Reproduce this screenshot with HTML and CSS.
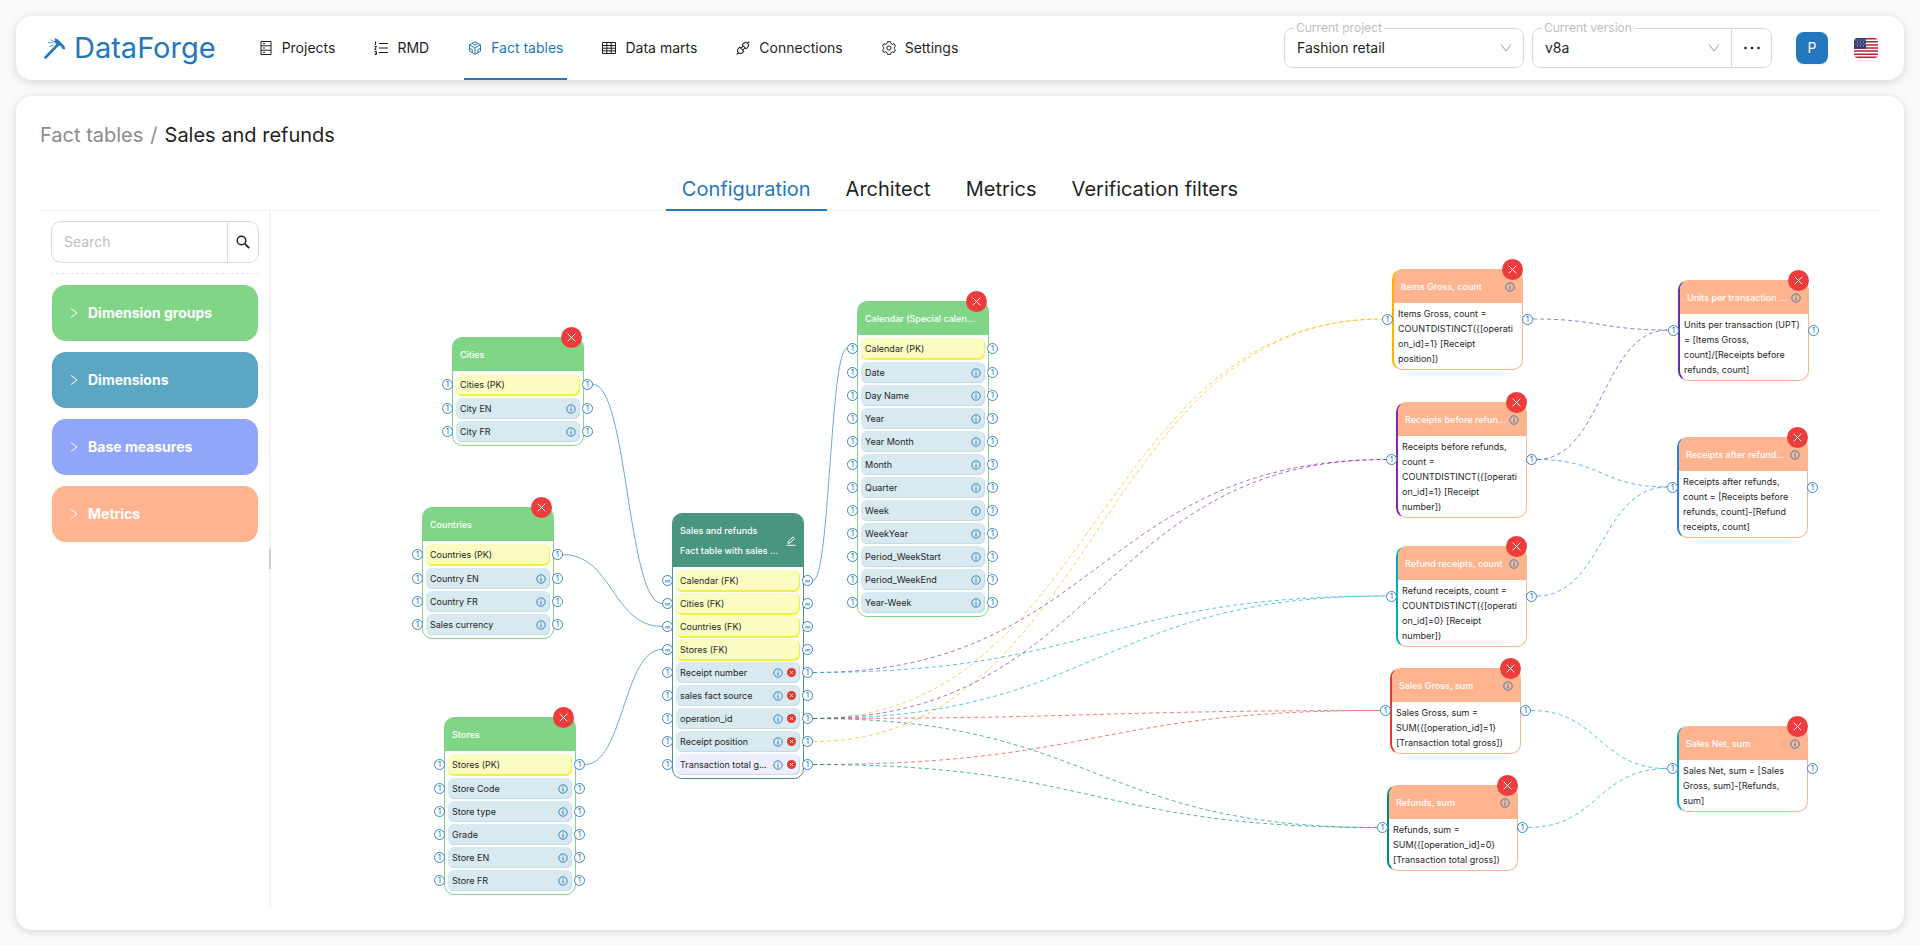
FILE: index.html
```html
<!DOCTYPE html>
<html lang="en">
<head>
    <meta charset="UTF-8">
    <meta name="viewport" content="width=device-width, initial-scale=1.0">
    <title>DataForge - Sales and refunds</title>
    <link rel="stylesheet" href="styles.css">
</head>
<body>
    <header class="header">
        <a class="logo" href="#">
            <svg class="logo-icon" viewBox="0 0 22 22" fill="none" stroke="currentColor">
                <path d="M1.500 20.500L14 7.500" stroke-width="2.600" stroke-linecap="round"/>
                <path d="M10.500 1L14 2.500L20.500 9L21 12.500L18.500 12L17 9.500L11.500 5Z" fill="currentColor" stroke="none"/>
                <path d="M11 3.500L15.500 8.500" stroke-width="3"/>
                <path d="M4 5.500L10 6M5 9.500L9.500 8M6 2.500L10 4.500" stroke-width="1" opacity="0.7"/>
            </svg>
            <span>DataForge</span>
        </a>

        <nav class="menu">
            <a class="menu-item" href="#">
                <svg class="icon" viewBox="0 0 14 14" fill="none" stroke="currentColor"><path d="M2 .5h10v13H2zM2 4.800h10M2 9.200h10M4 2.700h2M4 7h2M4 11.400h2"/></svg>
                Projects
            </a>
            <a class="menu-item" href="#">
                <svg class="icon" viewBox="0 0 14 14" fill="none" stroke="currentColor"><path d="M5 2.500h9M5 7h9M5 11.500h9M1.500 .5v3.500M.5 5.500h2L.5 8.500h2M.5 10.500h2v3h-2M1 12h1.500"/></svg>
                RMD
            </a>
            <a class="menu-item active" href="#">
                <svg class="icon" viewBox="0 0 14 14" fill="none" stroke="currentColor"><path d="M7 .8l5.500 3v6.400L7 13.200l-5.500-3V3.800zM1.500 3.800L7 7l5.500-3.200M7 7v6.200M4.200 2.400L7 4l2.800-1.600M1.500 7.200L4.200 8.700v3M12.500 7.200L9.800 8.700v3"/></svg>
                Fact tables
            </a>
            <a class="menu-item" href="#">
                <svg class="icon" viewBox="0 0 14 14" fill="none" stroke="currentColor"><path d="M.5 1.500h13v11H.5zM.5 4.500h13M.5 7.200h13M.5 9.900h13M4.800 1.500v11M9.200 1.500v11"/></svg>
                Data marts
            </a>
            <a class="menu-item" href="#">
                <svg class="icon" viewBox="0 0 14 14" fill="none" stroke="currentColor"><path transform="rotate(45 7 7)" d="M7-2V.5M4.200 5.300V3.400a2.800 2.900 0 0 1 5.600 0v1.900zM5.700 5.300v3.200M8.300 5.300v3.200M4.200 8.700v1.900a2.800 2.900 0 0 0 5.600 0V8.700zM7 13.500V16"/></svg>
                Connections
            </a>
            <a class="menu-item" href="#">
                <svg class="icon" viewBox="0 0 14 14" fill="none" stroke="currentColor"><path d="M5.500 .7h3l.5 1.800 1.300 .8 1.800-.5 1.400 2.500L12.200 6.500v1.200l1.300 1.200-1.400 2.500-1.800-.5-1.300 .8-.5 1.700h-3L5 11.700l-1.300-.8-1.800 .5L.5 8.900l1.300-1.200V6.500L.5 5.300l1.400-2.500 1.800 .5L5 2.500z"/><circle cx="7" cy="7" r="2.100"/></svg>
                Settings
            </a>
        </nav>

        <div class="header-controls">
            <div class="field field-project">
                <label class="field-label" for="project">Current project</label>
                <select id="project"><option>Fashion retail</option></select>
                <svg class="arrow" viewBox="0 0 12 12" fill="none" stroke="currentColor"><path d="M1 2.500L6 9l5-6.500"/></svg>
            </div>
            <div class="version">
                <div class="field field-version">
                    <label class="field-label" for="version">Current version</label>
                    <select id="version"><option>v8a</option></select>
                    <svg class="arrow" viewBox="0 0 12 12" fill="none" stroke="currentColor"><path d="M1 2.500L6 9l5-6.500"/></svg>
                </div>
                <button class="more" type="button" aria-label="Version actions">
                    <svg class="more-icon" viewBox="0 0 16 16" fill="currentColor"><circle cx="1.500" cy="8" r="1.300"/><circle cx="8" cy="8" r="1.300"/><circle cx="14.500" cy="8" r="1.300"/></svg>
                </button>
            </div>
            <button class="avatar" type="button">P</button>
            <button class="language" type="button" aria-label="Language">
                <svg viewBox="0 0 24 20" width="24" height="20">
                    <path fill="#fff" d="M0 0h24v20H0z"/>
                    <path stroke="#b22234" stroke-width="1.540" d="M0 .77h24M0 3.850h24M0 6.920h24M0 10h24M0 13.080h24M0 16.150h24M0 19.230h24"/>
                    <path fill="#2f3b6e" d="M0 0h12v10.770H0z"/>
                    <path stroke="#c5cbe0" stroke-width="1" stroke-dasharray="1 2" d="M1.500 2h10M3 4h8M1.500 6h10M3 8h8"/>
                </svg>
            </button>
        </div>
    </header>

    <main class="content">
        <div class="breadcrumb">
            <a href="#">Fact tables</a>
            <span class="separator">/</span>
            <span class="current">Sales and refunds</span>
        </div>

        <div class="tabs" role="tablist">
            <button class="tab active" type="button" role="tab" aria-selected="true">Configuration</button>
            <button class="tab" type="button" role="tab">Architect</button>
            <button class="tab" type="button" role="tab">Metrics</button>
            <button class="tab" type="button" role="tab">Verification filters</button>
        </div>

        <div class="workspace">
            <aside class="sidebar">
                <form class="search">
                    <input type="text" placeholder="Search" aria-label="Search">
                    <button type="button" aria-label="Find">
                        <svg viewBox="0 0 14 14" fill="none" stroke="currentColor"><circle cx="5.500" cy="5.500" r="4.300" stroke-width="1.400"/><path d="M8.700 8.700L13.200 13.200" stroke-width="1.800"/></svg>
                    </button>
                </form>
                <div class="panels">
                    <button class="panel panel-groups" type="button">
                        <svg viewBox="0 0 8 12" fill="none" stroke="currentColor"><path d="M.8 1.300L7 6 .8 10.700"/></svg>
                        Dimension groups
                    </button>
                    <button class="panel panel-dimensions" type="button">
                        <svg viewBox="0 0 8 12" fill="none" stroke="currentColor"><path d="M.8 1.300L7 6 .8 10.700"/></svg>
                        Dimensions
                    </button>
                    <button class="panel panel-measures" type="button">
                        <svg viewBox="0 0 8 12" fill="none" stroke="currentColor"><path d="M.8 1.300L7 6 .8 10.700"/></svg>
                        Base measures
                    </button>
                    <button class="panel panel-metrics" type="button">
                        <svg viewBox="0 0 8 12" fill="none" stroke="currentColor"><path d="M.8 1.300L7 6 .8 10.700"/></svg>
                        Metrics
                    </button>
                </div>
            </aside>
            <div class="splitter"></div>
            <div class="canvas" id="canvas">
                <svg class="edges" id="edges"></svg>
            </div>
        </div>
    </main>

    <script src="script.js"></script>
</body>
</html>
```
FILE: styles.css
```css
* {
    box-sizing: border-box;
}

body {
    display: flex;
    flex-direction: column;
    gap: 16px;
    min-height: 100vh;
    margin: 0;
    padding: 16px 16px 15px;
    background: #fafafa;
    color: #1f1f1f;
    font-family: Inter, "Liberation Sans", sans-serif;
    font-size: 14px;
    line-height: 22px;
}

a {
    color: inherit;
    text-decoration: none;
}

button,
input,
select {
    margin: 0;
    padding: 0;
    border: 0;
    background: none;
    color: inherit;
    font: inherit;
}

button {
    cursor: pointer;
}

svg {
    display: block;
    flex: none;
}

/* header */

.header,
.content {
    background: #fff;
    border-radius: 16px;
    box-shadow: 0 2px 10px rgba(0, 0, 0, 0.15);
}

.header {
    display: flex;
    align-items: center;
    height: 64px;
    padding: 0 26px 0 28px;
}

.logo {
    display: flex;
    align-items: center;
    gap: 8px;
    margin-right: 39px;
    color: #2378bd;
    font-size: 29px;
    line-height: 40px;
}

.logo-icon {
    width: 22px;
    height: 22px;
}

.menu {
    display: flex;
    gap: 31px;
    height: 100%;
}

.menu-item {
    display: flex;
    align-items: center;
    gap: 9px;
    padding: 0 4px;
    border-top: 2px solid transparent;
    border-bottom: 2px solid transparent;
    white-space: nowrap;
}

.menu-item.active {
    border-bottom-color: #2378bd;
    color: #2378bd;
}

.icon {
    width: 14px;
    height: 14px;
}

.header-controls {
    display: flex;
    align-items: center;
    gap: 24px;
    margin-left: auto;
}

.field {
    position: relative;
    height: 40px;
    border: 1px solid #d9d9d9;
    border-radius: 8px;
}

.field-project {
    width: 240px;
    margin-right: -16px;
}

.version {
    display: flex;
}

.field-version {
    width: 200px;
    border-radius: 8px 0 0 8px;
}

.field select {
    width: 100%;
    height: 100%;
    padding-left: 12px;
    appearance: none;
    outline: none;
}

.field-label {
    position: absolute;
    top: -9px;
    left: 9px;
    padding: 0 2px;
    background: #fff;
    color: #bfbfbf;
    font-size: 12px;
    line-height: 16px;
}

.arrow {
    position: absolute;
    top: 13px;
    right: 11px;
    width: 12px;
    height: 12px;
    color: #999;
    pointer-events: none;
}

.more {
    display: grid;
    place-items: center;
    width: 41px;
    height: 40px;
    margin-left: -1px;
    border: 1px solid #d9d9d9;
    border-radius: 0 8px 8px 0;
}

.more-icon {
    width: 16px;
    height: 16px;
}

.avatar {
    width: 32px;
    height: 32px;
    border-radius: 8px;
    background: #2378bd;
    box-shadow: 0 2px 0 rgba(0, 0, 0, 0.04);
    color: #fff;
}

.language {
    overflow: hidden;
    height: 20px;
    margin-left: 2px;
    border-radius: 4px;
    box-shadow: 0 4px 0 rgba(0, 0, 0, 0.04);
}

/* page */

.content {
    display: flex;
    flex: 1;
    flex-direction: column;
    padding: 24px;
}

.breadcrumb {
    display: flex;
    gap: 7px;
    margin-bottom: 17px;
    color: #8c8c8c;
    font-size: 20px;
    line-height: 30px;
}

.breadcrumb .current {
    color: #1f1f1f;
}

.tabs {
    display: flex;
    justify-content: center;
    gap: 3px;
    height: 44px;
    border-bottom: 1px solid #f0f0f0;
}

.tab {
    height: 44px;
    padding: 0 16px;
    border-top: 2px solid transparent;
    border-bottom: 2px solid transparent;
    font-size: 20px;
}

.tab.active {
    border-bottom-color: #2378bd;
    color: #2378bd;
}

.workspace {
    display: flex;
    flex: 1;
}

.sidebar {
    width: 229px;
    padding: 10px 10px 0 11px;
}

.search {
    display: flex;
    height: 42px;
    border: 1px solid #d9d9d9;
    border-radius: 10px;
}

.search input {
    flex: 1;
    min-width: 0;
    padding-left: 12px;
    outline: none;
}

.search input::placeholder {
    color: #bfbfbf;
}

.search button {
    display: grid;
    place-items: center;
    width: 31px;
    border-left: 1px solid #d9d9d9;
}

.search svg {
    width: 14px;
    height: 14px;
}

.panels {
    display: flex;
    flex-direction: column;
    gap: 11px;
    margin-top: 10px;
    padding: 11px 1px 0;
    border-top: 1px dashed #e8e8e8;
}

.panel {
    display: flex;
    align-items: center;
    gap: 10px;
    height: 56px;
    padding-left: 18px;
    border-radius: 14px;
    color: #fff;
    font-weight: 700;
}

.panel svg {
    width: 8px;
    height: 12px;
}

.panel-groups {
    background: #81d587;
}

.panel-dimensions {
    background: #5ba6c2;
}

.panel-measures {
    background: #91a6f9;
}

.panel-metrics {
    background: #ffb490;
}

.splitter {
    display: flex;
    align-items: center;
    width: 2px;
    background: #f3f3f3;
}

.splitter::before {
    width: 2px;
    height: 20px;
    background: #ccc;
    content: "";
}

/* diagram */

.canvas {
    position: relative;
    flex: 1;
    font-size: 9px;
    line-height: 15px;
}

.edges {
    position: absolute;
    width: 100%;
    height: 100%;
    fill: none;
    stroke-opacity: 0.65;
}

.edges .dashed {
    stroke-dasharray: 4 3;
}

.node {
    position: absolute;
    width: 132px;
    border: 1px solid #81d587;
    border-radius: 10px;
    background: #fff;
}

.node-header {
    display: flex;
    align-items: center;
    justify-content: space-between;
    height: 33px;
    padding: 0 7px;
    border-radius: 8px 8px 0 0;
    background: #81d587;
    color: #fff;
    white-space: nowrap;
}

.node-title {
    font-weight: 500;
}

.node-fact {
    border-color: #4a957f;
}

.node-fact .node-header {
    height: 53px;
    background: #4a957f;
    line-height: 20px;
}

.node-metric {
    width: 131px;
    border-color: #ffb490;
    border-left-width: 2px;
}

.node-metric .node-header {
    background: #ffb490;
}

.formula {
    padding: 3px 5px 3px 4px;
    overflow-wrap: anywhere;
}

.rows {
    display: flex;
    flex-direction: column;
    gap: 2px;
    margin: 0;
    padding: 3px;
    list-style: none;
}

.row {
    position: relative;
    display: flex;
    align-items: center;
    gap: 4px;
    height: 21px;
    padding: 0 4px;
    border-radius: 6px;
    background: #d8e9ef;
    box-shadow: inset -1px -1px 0 #c2dce8;
    white-space: nowrap;
}

.row-text {
    flex: 1;
}

.row-key {
    background: #fafcc2;
    box-shadow: inset -1px -1px 0 #eef43c, 0 1px 0 #eef43c;
}

.node-dimension .row-key {
    margin-bottom: 1px;
}

.row-measure {
    background: #eceffe;
    box-shadow: inset -1px -1px 0 #d0d6fb;
}

.port {
    position: absolute;
    top: 5px;
    display: grid;
    place-items: center;
    width: 11px;
    height: 11px;
    border: 1px solid #3a86c8;
    border-radius: 50%;
    background: #fff;
    color: #2378bd;
    font-size: 8px;
    line-height: 9px;
}

.row-key .port-many {
    font-size: 6px;
}

.port-left {
    left: -14px;
}

.port-right {
    right: -13px;
}

.node-metric > .port {
    top: calc(50% - 6px);
}

.node-metric > .port-left {
    left: -12px;
}

.node-metric > .port-right {
    right: -11px;
}

.close {
    position: absolute;
    top: -11px;
    right: 1px;
    display: grid;
    place-items: center;
    width: 21px;
    height: 21px;
    border-radius: 50%;
    background: #ee3b3b;
    color: #fff;
}

.node-metric .close {
    right: -1px;
}

.close svg {
    width: 9px;
    height: 9px;
}

.info {
    width: 10px;
    height: 10px;
    color: #2378bd;
}

.remove {
    width: 9px;
    height: 9px;
}

.edit {
    width: 10px;
    height: 10px;
}
```
FILE: script.js
```js
const canvas = document.getElementById('canvas');
const edgesSvg = document.getElementById('edges');

const infoIcon = '<svg class="info" viewBox="0 0 10 10" fill="none" stroke="currentColor"><circle cx="5" cy="5" r="4.2" stroke-width="0.9"/><path d="M5 4.300V7.500M5 2.500V3.400"/></svg>';
const removeIcon = '<svg class="remove" viewBox="0 0 9 9"><circle cx="4.500" cy="4.500" r="4.500" fill="#e53935"/><path d="M3 3l3 3M6 3L3 6" stroke="#fff" stroke-width="0.9"/></svg>';
const editIcon = '<svg class="edit" viewBox="0 0 10 10" fill="none" stroke="currentColor"><path d="M.5 9.300h9M2 7.300l.4-2L7 .9l1.500 1.500L4 6.900z"/></svg>';
const closeButton = '<button class="close" type="button" aria-label="Remove"><svg viewBox="0 0 9 9" stroke="currentColor"><path d="M.7 .7l7.600 7.600M8.300 .7L.7 8.300"/></svg></button>';

// x, y are the top left corner of a node on the canvas
const dimensions = [
    { id: 'cities', x: 181, y: 126, title: 'Cities', rows: ['Cities (PK)', 'City EN', 'City FR'] },
    { id: 'countries', x: 151, y: 296, title: 'Countries', rows: ['Countries (PK)', 'Country EN', 'Country FR', 'Sales currency'] },
    { id: 'stores', x: 173, y: 506, title: 'Stores', rows: ['Stores (PK)', 'Store Code', 'Store type', 'Grade', 'Store EN', 'Store FR'] },
    { id: 'calendar', x: 586, y: 90, title: 'Calendar (Special calen...', rows: ['Calendar (PK)', 'Date', 'Day Name', 'Year', 'Year Month', 'Month', 'Quarter', 'Week', 'WeekYear', 'Period_WeekStart', 'Period_WeekEnd', 'Year-Week'] }
];

const fact = {
    id: 'fact', x: 401, y: 302,
    keys: ['Calendar (FK)', 'Cities (FK)', 'Countries (FK)', 'Stores (FK)'],
    fields: ['Receipt number', 'sales fact source', 'operation_id', 'Receipt position', 'Transaction total g...']
};

const metrics = [
    { id: 'items', x: 1121, y: 58, color: '#ffb300', title: 'Items Gross, count', formula: 'Items Gross, count = COUNTDISTINCT({[operation_id]=1} [Receipt position])' },
    { id: 'before', x: 1125, y: 191, color: '#8e24aa', title: 'Receipts before refun...', formula: 'Receipts before refunds, count = COUNTDISTINCT({[operation_id]=1} [Receipt number])' },
    { id: 'refundReceipts', x: 1125, y: 335, color: '#00acc1', title: 'Refund receipts, count', formula: 'Refund receipts, count = COUNTDISTINCT({[operation_id]=0} [Receipt number])' },
    { id: 'gross', x: 1119, y: 457, color: '#e53935', title: 'Sales Gross, sum', formula: 'Sales Gross, sum = SUM({[operation_id]=1} [Transaction total gross])' },
    { id: 'refunds', x: 1116, y: 574, color: '#00897b', title: 'Refunds, sum', formula: 'Refunds, sum = SUM({[operation_id]=0} [Transaction total gross])' },
    { id: 'units', x: 1407, y: 69, color: '#5e35b1', title: 'Units per transaction ...', formula: 'Units per transaction (UPT) = [Items Gross, count]/[Receipts before refunds, count]' },
    { id: 'after', x: 1406, y: 226, color: '#1e88e5', title: 'Receipts after refund...', formula: 'Receipts after refunds, count = [Receipts before refunds, count]-[Refund receipts, count]' },
    { id: 'net', x: 1406, y: 515, color: '#00acc1', title: 'Sales Net, sum', formula: 'Sales Net, sum = [Sales Gross, sum]-[Refunds, sum]' }
];

const links = [
    ['cities-0', 'fact-1'],
    ['countries-0', 'fact-2'],
    ['stores-0', 'fact-3'],
    ['fact-0', 'calendar-0'],
    ['fact-6', 'items'],
    ['fact-7', 'items'],
    ['fact-4', 'before'],
    ['fact-6', 'before'],
    ['fact-4', 'refundReceipts'],
    ['fact-6', 'refundReceipts'],
    ['fact-6', 'gross'],
    ['fact-8', 'gross'],
    ['fact-6', 'refunds'],
    ['fact-8', 'refunds'],
    ['items', 'units'],
    ['before', 'units'],
    ['before', 'after'],
    ['refundReceipts', 'after'],
    ['gross', 'net'],
    ['refunds', 'net']
];

function ports(id, sign) {
    const many = sign === '1' ? '' : 'port-many';
    return `<span class="port port-left ${many}" id="${id}-in">${sign}</span><span class="port port-right ${many}" id="${id}-out">${sign}</span>`;
}

function row(id, text, type, sign, icons) {
    return `<li class="row ${type}"><span class="row-text">${text}</span>${icons}${ports(id, sign)}</li>`;
}

function addNode(node, type, html) {
    const el = document.createElement('section');
    el.className = `node ${type}`;
    el.style.left = `${node.x}px`;
    el.style.top = `${node.y}px`;
    if (node.color) el.style.borderLeftColor = node.color;
    el.innerHTML = html;
    canvas.appendChild(el);
}

dimensions.forEach(node => {
    const rows = node.rows.map((text, i) => row(`${node.id}-${i}`, text, i ? '' : 'row-key', '1', i ? infoIcon : '')).join('');
    addNode(node, 'node-dimension', `<div class="node-header"><span class="node-title">${node.title}</span></div>${closeButton}<ul class="rows">${rows}</ul>`);
});

const factRows = fact.keys.map((text, i) => row(`fact-${i}`, text, 'row-key', '∞', '')).join('')
    + fact.fields.map((text, i) => row(`fact-${i + 4}`, text, i === 4 ? 'row-measure' : '', '1', infoIcon + removeIcon)).join('');
addNode(fact, 'node-fact', `<div class="node-header"><span class="node-title">Sales and refunds<br>Fact table with sales ...</span>${editIcon}</div><ul class="rows">${factRows}</ul>`);

metrics.forEach(node => {
    addNode(node, 'node-metric', `<div class="node-header"><span class="node-title">${node.title}</span>${infoIcon}</div>${closeButton}<div class="formula">${node.formula}</div>${ports(node.id, '1')}`);
});

function drawEdges() {
    const base = canvas.getBoundingClientRect();
    edgesSvg.innerHTML = links.map(([from, to]) => {
        const a = document.getElementById(`${from}-out`).getBoundingClientRect();
        const b = document.getElementById(`${to}-in`).getBoundingClientRect();
        const x1 = a.right - base.left;
        const y1 = a.top + a.height / 2 - base.top;
        const x2 = b.left - base.left;
        const y2 = b.top + b.height / 2 - base.top;
        const mid = (x1 + x2) / 2;
        const target = metrics.find(m => m.id === to);
        return `<path class="${target ? 'dashed' : ''}" stroke="${target ? target.color : '#2378bd'}" d="M${x1} ${y1}C${mid} ${y1} ${mid} ${y2} ${x2} ${y2}"/>`;
    }).join('');
}

drawEdges();
window.addEventListener('resize', drawEdges);
```
